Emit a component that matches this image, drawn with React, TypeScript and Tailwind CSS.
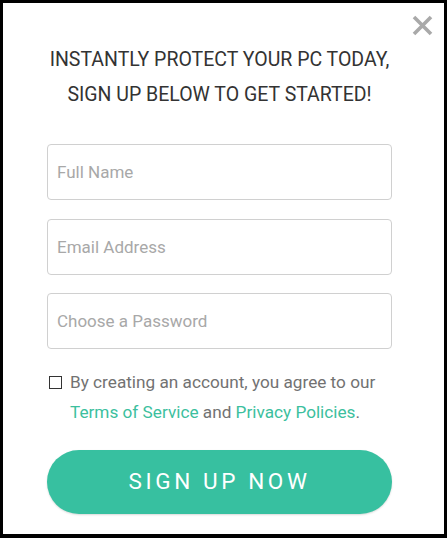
export default function App() {
  return (
    <div className="h-[538px] w-[447px] bg-black pt-[3px] pl-[3px] pr-[3px] pb-[4px]" style={{ fontFamily: 'Roboto, "Noto Sans", sans-serif' }}>
      <div className="relative h-full w-full bg-white pl-[44px] pr-[52px] pt-[39px]">
        {/* close */}
        <button className="absolute right-[11px] top-[12px] text-[#a9a9a9]" aria-label="Close">
          <svg width="21" height="21" viewBox="0 0 21 21">
            <path d="M2 2 L19 19 M19 2 L2 19" stroke="currentColor" strokeWidth="3.6" />
          </svg>
        </button>

        <h2 className="text-center text-[19.5px] leading-[35px] text-[#333]">
          INSTANTLY PROTECT YOUR PC TODAY,
          <br />
          SIGN UP BELOW TO GET STARTED!
        </h2>

        <div className="mt-[32px] flex flex-col gap-[18.5px]">
          {['Full Name', 'Email Address', 'Choose a Password'].map((p) => (
            <input
              key={p}
              placeholder={p}
              className="h-[56px] w-full rounded-[4px] border border-[#d0d0d0] px-[9px] text-[17px] text-[#333] placeholder:text-[#a8a8a8] outline-none"
            />
          ))}
        </div>

        <div className="mt-[18px] flex gap-[8px] pl-[2px] text-[17.2px] leading-[30px] text-[#727272]">
          <span className="mt-[9px] h-[13px] w-[13px] shrink-0 border border-[#333]" />
          <p>
            By creating an account, you agree to our{' '}
            <a className="text-[#3cbf9e]">Terms of Service</a> and{' '}
            <a className="text-[#3cbf9e]">Privacy Policies</a>.
          </p>
        </div>

        <button className="mt-[23px] h-[64px] w-full rounded-full bg-[#37c0a0] text-[22.5px] tracking-[3.6px] text-white shadow-[0_1px_2px_rgba(0,0,0,0.15)]">
          SIGN UP NOW
        </button>
      </div>
    </div>
  );
}
